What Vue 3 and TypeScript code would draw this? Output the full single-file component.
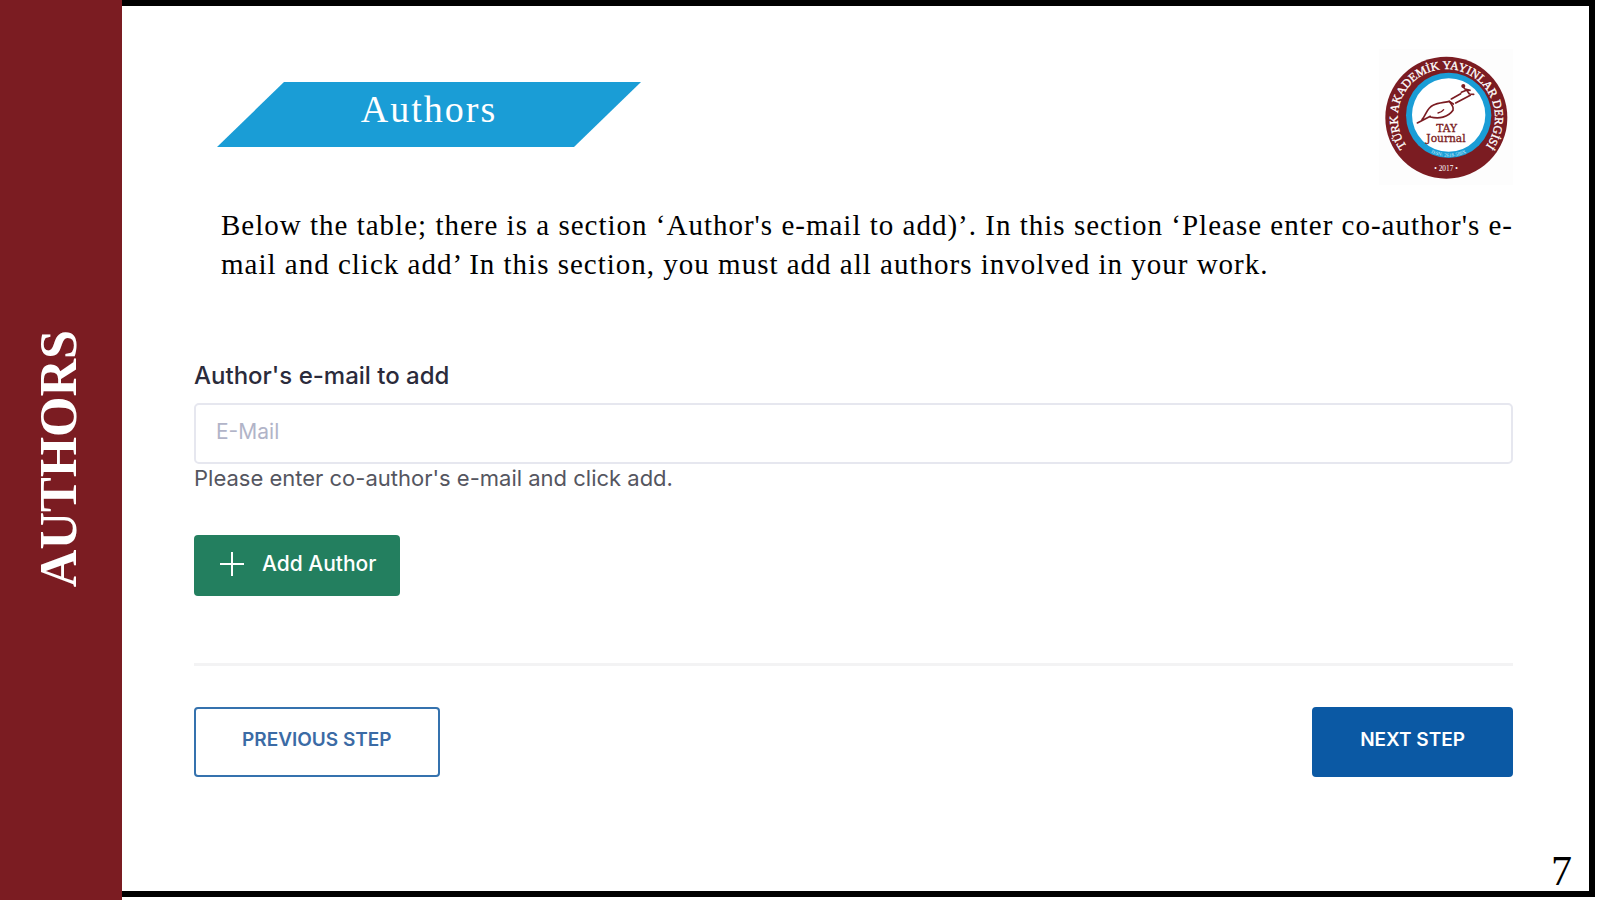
<script setup lang="ts">
import { ref } from 'vue'

const email = ref('')
const pageNumber = 7
</script>

<template>
  <div class="slide">
    <aside class="side">
      <h2 class="side-title">AUTHORS</h2>
    </aside>
    <main class="panel">
      <header class="header">
        <div class="banner"><h1 class="banner-title">Authors</h1></div>
        <svg class="logo" viewBox="28 27 402 408" role="img" aria-label="TAY Journal">
          <defs>
            <path id="ring-top" d="M 118 327 A 146 146 0 1 1 342 327" />
            <path id="ring-issn" d="M 157 321 A 124 124 0 0 0 317 321" />
          </defs>
          <rect x="28" y="27" width="402" height="408" fill="#fdfdfd" />
          <circle cx="230" cy="233" r="183" fill="#7b1c22" />
          <circle cx="237" cy="226" r="128" fill="#1a9dd6" />
          <circle cx="237" cy="225" r="110" fill="#fff" />
          <text class="ring-text"><textPath href="#ring-top" startOffset="50%">TÜRK AKADEMİK YAYINLAR DERGİSİ</textPath></text>
          <text class="issn"><textPath href="#ring-issn" startOffset="50%">ISSN: 2618-589X</textPath></text>
          <text class="name"><tspan x="231" y="276">TAY</tspan><tspan x="229" y="306">Journal</tspan></text>
          <text class="year" x="229" y="393">• 2017 •</text>
          <g fill="none" stroke="#7b1c22" stroke-linecap="round" stroke-linejoin="round">
            <path stroke-width="5" d="M143 249 Q165 238 182 229 M157 239 C170 224 171 205 190 196 C205 188 224 188 239 184 M182 231 C207 237 235 233 250 211 Q253 200 239 184" />
            <path stroke-width="4" d="M205 219 Q216 217 222 209" />
            <path stroke-width="5" d="M239 184 L251 192 M245 177 L273 161 M258 189 L302 166 M275 157 L292 150 M278 138 L286 147 L301 151 M291 150 L299 162 L312 163" />
          </g>
          <circle cx="281" cy="138" r="6" fill="#7b1c22" />
        </svg>
      </header>

      <p class="intro">Below the table; there is a section ‘Author's e-mail to add)’. In this section ‘Please enter co-author's e-mail and click add’ In this section, you must add all authors involved in your work.</p>

      <form class="form" @submit.prevent>
        <label class="label" for="email">Author's e-mail to add</label>
        <input id="email" v-model="email" class="field" type="email" placeholder="E-Mail" aria-describedby="email-help" />
        <p id="email-help" class="help">Please enter co-author's e-mail and click add.</p>
        <button class="btn add" type="button">
          <svg class="plus" viewBox="0 0 24 24" aria-hidden="true"><path d="M12 0V24M0 12H24" /></svg>
          Add Author
        </button>
        <hr class="rule" />
        <div class="steps">
          <button class="btn prev" type="button">PREVIOUS STEP</button>
          <button class="btn next" type="submit">NEXT STEP</button>
        </div>
      </form>

      <footer class="page-number">{{ pageNumber }}</footer>
    </main>
  </div>
</template>

<style>
body {
  margin: 0;
  background: #fff;
}
</style>

<style scoped>
.slide {
  display: flex;
  box-sizing: border-box;
  min-height: 100vh;
  padding-right: 5px;
  font-family: "Liberation Serif", "Times New Roman", serif;
  color: #000;
}
.side {
  display: flex;
  flex: 0 0 122px;
  align-items: center;
  justify-content: center;
  box-sizing: border-box;
  padding: 18px 4px 0 0;
  background: #7b1c22;
}
.side-title {
  margin: 0;
  transform: rotate(180deg);
  writing-mode: vertical-rl;
  font-size: 52px;
  line-height: 60px;
  color: #fff;
}
.panel {
  display: flex;
  flex: 1;
  flex-direction: column;
  box-sizing: border-box;
  min-width: 0;
  margin-bottom: 3px;
  padding: 43px 76px 0 72px;
  border: 6px solid #000;
  border-left: 0;
}
.header {
  display: flex;
  align-items: flex-start;
  justify-content: space-between;
}
.banner {
  box-sizing: border-box;
  width: 424px;
  height: 65px;
  margin: 33px 0 0 23px;
  background: #1a9dd6;
  clip-path: polygon(67px 0, 100% 0, calc(100% - 67px) 100%, 0 100%);
}
.banner-title {
  margin: 0;
  font-size: 38px;
  font-weight: 400;
  line-height: 54px;
  letter-spacing: 2px;
  text-align: center;
  color: #fff;
}
.logo {
  width: 134px;
  height: 136px;
}
.ring-text {
  font-size: 36px;
  text-anchor: middle;
  fill: #fff;
  stroke: #fff;
  stroke-width: 1px;
}
.issn {
  font-size: 15px;
  text-anchor: middle;
  fill: #d6effa;
}
.name {
  font-family: "DejaVu Serif", serif;
  font-size: 32px;
  text-anchor: middle;
  fill: #7b1c22;
  stroke: #7b1c22;
  stroke-width: 1px;
}
.year {
  font-size: 22px;
  text-anchor: middle;
  fill: #fff;
}
.intro {
  margin: 21px 0 0 27px;
  font-size: 29px;
  line-height: 39px;
  letter-spacing: 1px;
  text-align: justify;
}
.form {
  display: flex;
  flex-direction: column;
  align-items: flex-start;
  margin-top: 76px;
  font-family: Inter, "Open Sans", sans-serif;
}
.label {
  font-size: 24px;
  font-weight: 500;
  line-height: 32px;
  color: #2b2b3b;
}
.field {
  box-sizing: border-box;
  width: 100%;
  height: 61px;
  margin-top: 11px;
  padding: 0 20px 4px;
  border: 2px solid #e6e7ef;
  border-radius: 5px;
  background: #fff;
  font: 400 21px/28px Inter, "Open Sans", sans-serif;
  color: #2b2b3b;
}
.field::placeholder {
  color: #b1b4c8;
  opacity: 1;
}
.help {
  margin: 0;
  font-size: 22px;
  line-height: 28px;
  color: #55565f;
}
.btn {
  display: flex;
  align-items: center;
  justify-content: center;
  box-sizing: border-box;
  border: 0;
  border-radius: 4px;
  font: 500 21px/28px Inter, "Open Sans", sans-serif;
  color: #fff;
}
.add {
  gap: 18px;
  height: 61px;
  margin-top: 43px;
  padding: 0 24px 4px 26px;
  background: #237f5f;
}
.plus {
  width: 24px;
  height: 24px;
  fill: none;
  stroke: #fff;
  stroke-width: 2px;
}
.rule {
  width: 100%;
  height: 3px;
  margin: 67px 0 41px;
  border: 0;
  background: #f3f3f4;
}
.steps {
  display: flex;
  justify-content: space-between;
  width: 100%;
}
.steps .btn {
  height: 70px;
  padding: 0 46px 4px;
  border: 2px solid #3572ae;
  font-size: 19px;
  font-weight: 600;
}
.steps .prev {
  background: #fff;
  color: #3b6ba5;
}
.steps .next {
  border-color: #0b59a4;
  background: #0b59a4;
}
.page-number {
  margin: auto -59px 0 0;
  font-size: 42px;
  line-height: 40px;
  text-align: right;
}
</style>
